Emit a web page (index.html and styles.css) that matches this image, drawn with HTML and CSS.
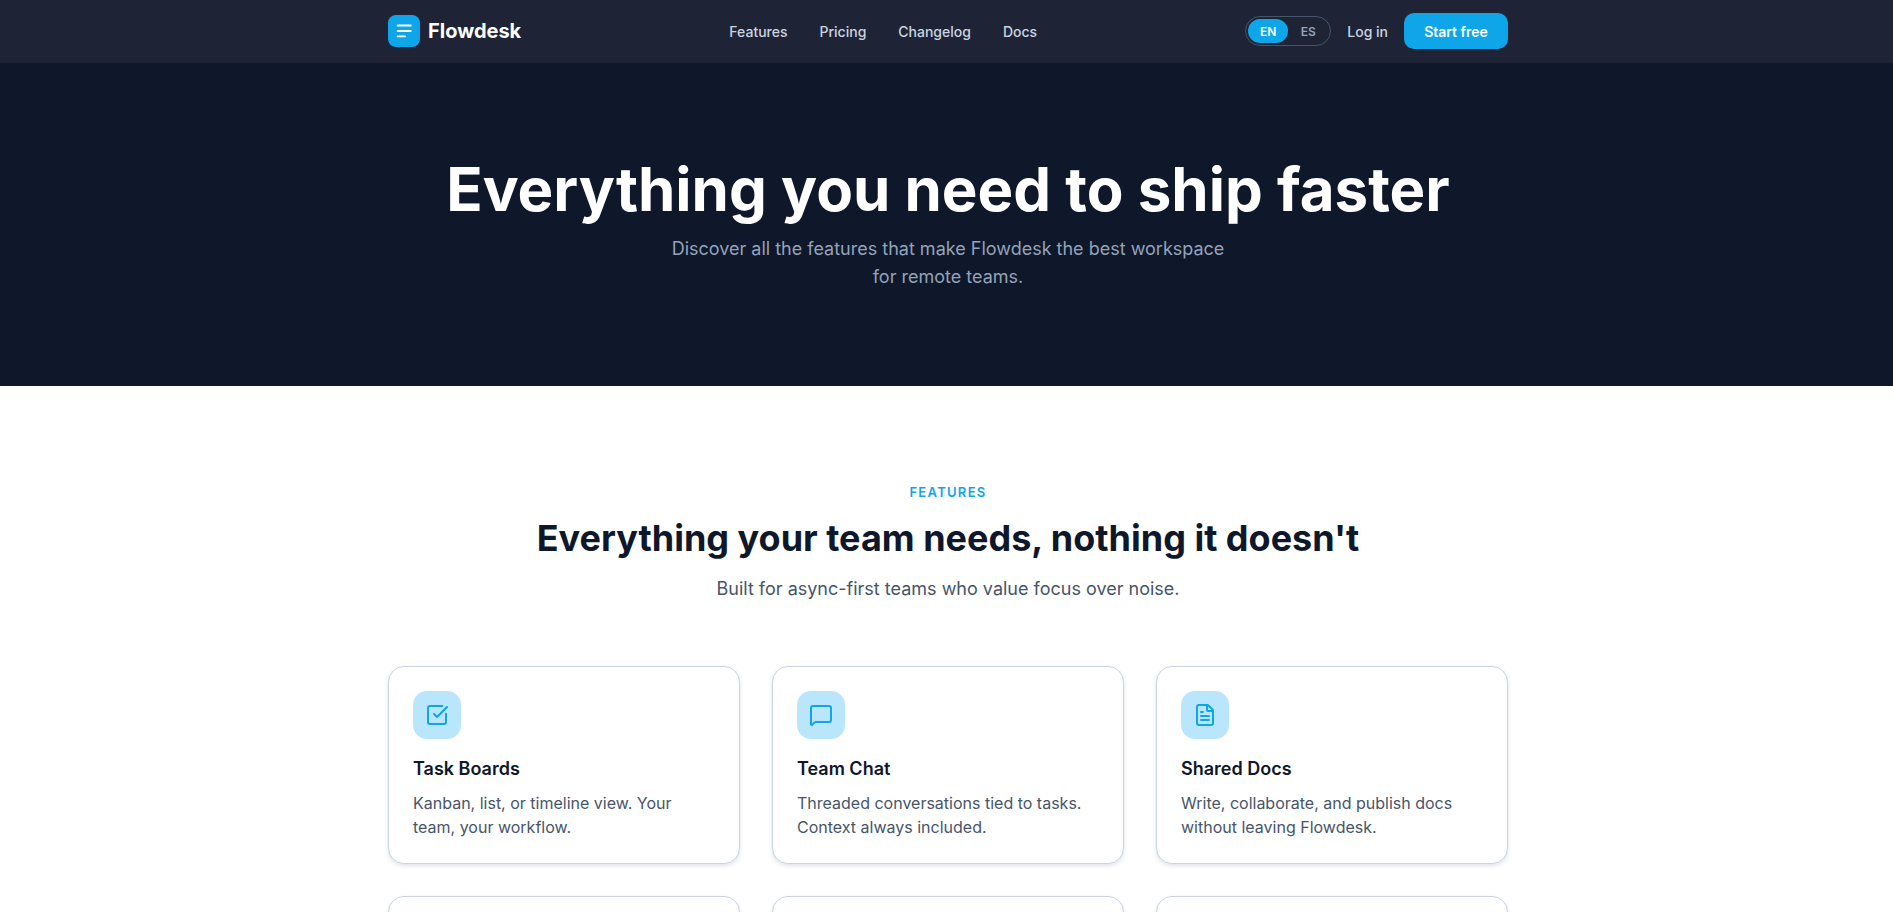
FILE: index.html
```html
<!DOCTYPE html>
<html lang="en">
<head>
  <meta charset="UTF-8">
  <meta name="viewport" content="width=device-width, initial-scale=1.0">
  <title>Flowdesk - Features</title>
  <link rel="stylesheet" href="styles.css">
</head>
<body>
  <header class="site-header">
    <div class="container header-row">
      <a class="logo" href="#">
        <span class="logo-icon">
          <svg viewBox="0 0 20 20" width="20" height="20" fill="none" stroke="#fff" stroke-width="1.8" stroke-linecap="round"><path d="M3.6 4.5h13.2M3.6 10h13.2M3.6 15.4h7.5"/></svg>
        </span>
        <span class="logo-text">Flowdesk</span>
      </a>
      <nav class="main-nav">
        <a href="#">Features</a>
        <a href="#">Pricing</a>
        <a href="#">Changelog</a>
        <a href="#">Docs</a>
      </nav>
      <div class="header-actions">
        <div class="lang-toggle">
          <button class="lang-btn active">EN</button>
          <button class="lang-btn">ES</button>
        </div>
        <a class="login-link" href="#">Log in</a>
        <a class="cta-btn" href="#">Start free</a>
      </div>
    </div>
  </header>

  <section class="hero">
    <h1>Everything you need to ship faster</h1>
    <p>Discover all the features that make Flowdesk the best workspace for remote teams.</p>
  </section>

  <section class="features">
    <div class="container">
      <div class="section-head">
        <span class="eyebrow">FEATURES</span>
        <h2>Everything your team needs, nothing it doesn't</h2>
        <p>Built for async-first teams who value focus over noise.</p>
      </div>
      <div class="card-grid">
        <article class="card">
          <div class="card-icon">
            <svg viewBox="0 0 24 24" width="24" height="24" fill="none" stroke="currentColor" stroke-width="2" stroke-linecap="round" stroke-linejoin="round"><path d="M21 10.656V19a2 2 0 0 1-2 2H5a2 2 0 0 1-2-2V5a2 2 0 0 1 2-2h12.344"/><path d="m9 11 3 3L22 4"/></svg>
          </div>
          <h3>Task Boards</h3>
          <p>Kanban, list, or timeline view. Your team, your workflow.</p>
        </article>
        <article class="card">
          <div class="card-icon">
            <svg viewBox="0 0 24 24" width="24" height="24" fill="none" stroke="currentColor" stroke-width="2" stroke-linecap="round" stroke-linejoin="round"><path d="M22 17a2 2 0 0 1-2 2H6.828a2 2 0 0 0-1.414.586l-2.202 2.202A.71.71 0 0 1 2 21.286V5a2 2 0 0 1 2-2h16a2 2 0 0 1 2 2z"/></svg>
          </div>
          <h3>Team Chat</h3>
          <p>Threaded conversations tied to tasks. Context always included.</p>
        </article>
        <article class="card">
          <div class="card-icon">
            <svg viewBox="0 0 24 24" width="24" height="24" fill="none" stroke="currentColor" stroke-width="2" stroke-linecap="round" stroke-linejoin="round"><path d="M6 22a2 2 0 0 1-2-2V4a2 2 0 0 1 2-2h8a2.4 2.4 0 0 1 1.704.706l3.588 3.588A2.4 2.4 0 0 1 20 8v12a2 2 0 0 1-2 2z"/><path d="M14 2v5a1 1 0 0 0 1 1h5"/><path d="M10 9H8M16 13H8M16 17H8"/></svg>
          </div>
          <h3>Shared Docs</h3>
          <p>Write, collaborate, and publish docs without leaving Flowdesk.</p>
        </article>
        <article class="card card-below"></article>
        <article class="card card-below"></article>
        <article class="card card-below"></article>
      </div>
    </div>
  </section>
</body>
</html>
```

FILE: styles.css
```css
* {
  box-sizing: border-box;
}
html {
  height: 912px;
  overflow: hidden;
}
body {
  width: 1896px;
  height: 912px;
  margin: 0;
  overflow: hidden;
  font-family: 'Inter', Arial, sans-serif;
  background: #fff;
  color: #0f172a;
}
a {
  text-decoration: none;
}
.container {
  width: 1120px;
  margin: 0 auto;
}
.site-header {
  background: #1e2436;
  height: 63px;
  padding-bottom: 1px;
}
.header-row {
  height: 100%;
  display: flex;
  align-items: center;
  justify-content: space-between;
}
.logo {
  display: flex;
  align-items: center;
  gap: 8px;
}
.logo-icon {
  width: 32px;
  height: 32px;
  border-radius: 8px;
  background: #0ea5e9;
  display: flex;
  align-items: center;
  justify-content: center;
}
.logo-text {
  font-size: 20px;
  font-weight: 700;
  color: #fff;
}
.main-nav {
  display: flex;
  gap: 32px;
}
.main-nav a,
.login-link {
  font-size: 14px;
  font-weight: 500;
  color: #cbd5e1;
}
.header-actions {
  display: flex;
  align-items: center;
  gap: 16px;
}
.lang-toggle {
  display: flex;
  padding: 2px;
  height: 30px;
  border: 1px solid #475569;
  border-radius: 999px;
}
.lang-btn {
  width: 40px;
  border: none;
  border-radius: 999px;
  background: none;
  color: #94a3b8;
  font-family: inherit;
  font-size: 12px;
  font-weight: 600;
  padding: 0;
}
.lang-btn.active {
  background: #0ea5e9;
  color: #fff;
}
.cta-btn {
  width: 104px;
  height: 36px;
  border-radius: 10px;
  background: #0ea5e9;
  color: #fff;
  font-size: 14px;
  font-weight: 600;
  display: flex;
  align-items: center;
  justify-content: center;
}
.hero {
  background: #0f172a;
  height: 323px;
  padding-top: 90px;
  text-align: center;
}
.hero h1 {
  margin: 0 0 10px;
  font-size: 60px;
  font-weight: 700;
  line-height: 72px;
  color: #fff;
}
.hero p {
  max-width: 560px;
  margin: 0 auto;
  font-size: 18px;
  line-height: 28px;
  color: #94a3b8;
}
.features {
  padding-top: 96px;
}
.section-head {
  text-align: center;
  margin-bottom: 63px;
}
.eyebrow {
  display: block;
  font-size: 13px;
  font-weight: 600;
  letter-spacing: 0.1em;
  color: #0ea5e9;
  line-height: 20px;
  margin-bottom: 15px;
}
.section-head h2 {
  margin: 0 0 15px;
  font-size: 36px;
  font-weight: 700;
  line-height: 1.2;
  color: #0f172a;
}
.section-head p {
  margin: 0;
  font-size: 18px;
  line-height: 28px;
  color: #475569;
}
.card-grid {
  display: grid;
  grid-template-columns: repeat(3, 1fr);
  gap: 32px;
}
.card {
  min-height: 197px;
  padding: 24px;
  background: #fff;
  border: 1px solid #cbd5e1;
  border-radius: 16px;
  box-shadow: 0 2px 4px rgba(100, 116, 139, 0.2);
}
.card-icon {
  width: 48px;
  height: 48px;
  margin-bottom: 16px;
  border-radius: 14px;
  background: #bae6fd;
  color: #0ea5e9;
  display: flex;
  align-items: center;
  justify-content: center;
}
.card h3 {
  margin: 0 0 8px;
  font-size: 18px;
  font-weight: 600;
  line-height: 28px;
  color: #0f172a;
}
.card p {
  margin: 0;
  font-size: 16px;
  line-height: 24px;
  color: #475569;
}
```
